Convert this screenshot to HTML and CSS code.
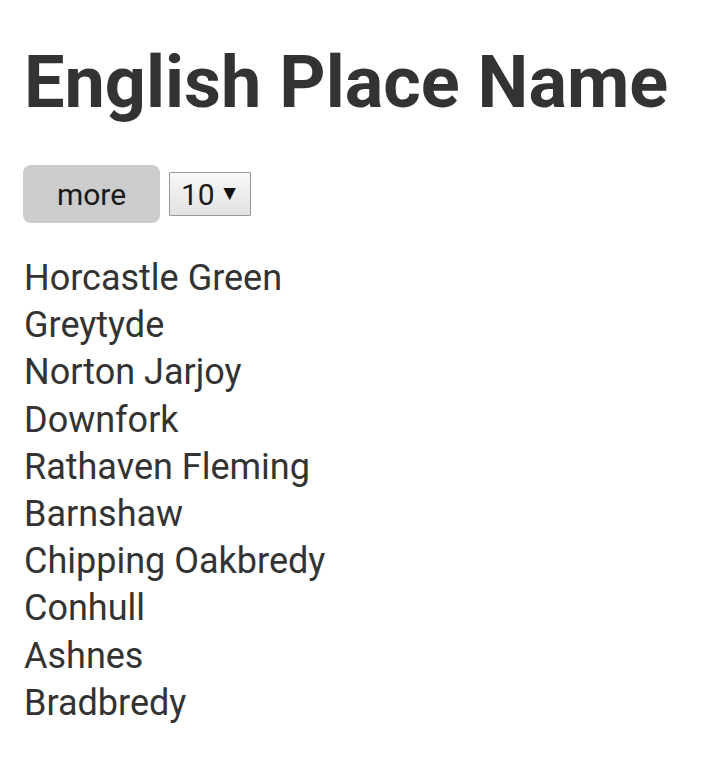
FILE: index.html
```html
<!DOCTYPE html>
<html lang="en">
<head>
    <meta charset="UTF-8">
    <meta name="viewport" content="width=device-width, initial-scale=1.0">
    <title>English Place Name</title>
    <link rel="stylesheet" href="styles.css">
</head>
<body>

<div class="container">
    <h1>English Place Name</h1>

    <div class="controls">
        <button id="btn-more" class="btn-more">more</button>
        <label class="select-wrap">
            <select id="count">
                <option>5</option>
                <option selected>10</option>
                <option>20</option>
            </select>
        </label>
    </div>

    <ul id="names" class="names">
        <li>Horcastle Green</li>
        <li>Greytyde</li>
        <li>Norton Jarjoy</li>
        <li>Downfork</li>
        <li>Rathaven Fleming</li>
        <li>Barnshaw</li>
        <li>Chipping Oakbredy</li>
        <li>Conhull</li>
        <li>Ashnes</li>
        <li>Bradbredy</li>
    </ul>
</div>

</body>
</html>
```

FILE: styles.css
```css
* {
    margin: 0;
    padding: 0;
    box-sizing: border-box;
}

body {
    font-family: Roboto, "Liberation Sans", sans-serif;
    background-color: #fff;
    color: #333;
}

.container {
    padding: 41px 23px 20px 24px;
}

h1 {
    font-size: 72px;
    font-weight: bold;
    line-height: 84px;
    margin-bottom: 40px;
}

.controls {
    display: flex;
    align-items: center;
    gap: 9px;
}

.btn-more {
    width: 137px;
    height: 58px;
    margin-left: -1px;
    font-family: inherit;
    font-size: 30px;
    color: #1a1a1a;
    background-color: #ccc;
    border: none;
    border-radius: 8px;
    cursor: pointer;
}

.select-wrap {
    position: relative;
    display: block;
    width: 82px;
    height: 44px;
}

.select-wrap::after {
    content: "\25BC";
    position: absolute;
    right: 11px;
    top: 8px;
    font-size: 21px;
    line-height: 26px;
    color: #111;
    pointer-events: none;
}

select {
    appearance: none;
    -webkit-appearance: none;
    width: 100%;
    height: 100%;
    padding: 0 0 0 11px;
    font-family: inherit;
    font-size: 30px;
    color: #1a1a1a;
    background: linear-gradient(#f8f8f8, #e2e2e2);
    border: 1px solid #999;
    border-radius: 1px;
}

.names {
    list-style: none;
    margin-top: 32px;
}

.names li {
    font-size: 36px;
    line-height: 47.2px;
}
```
